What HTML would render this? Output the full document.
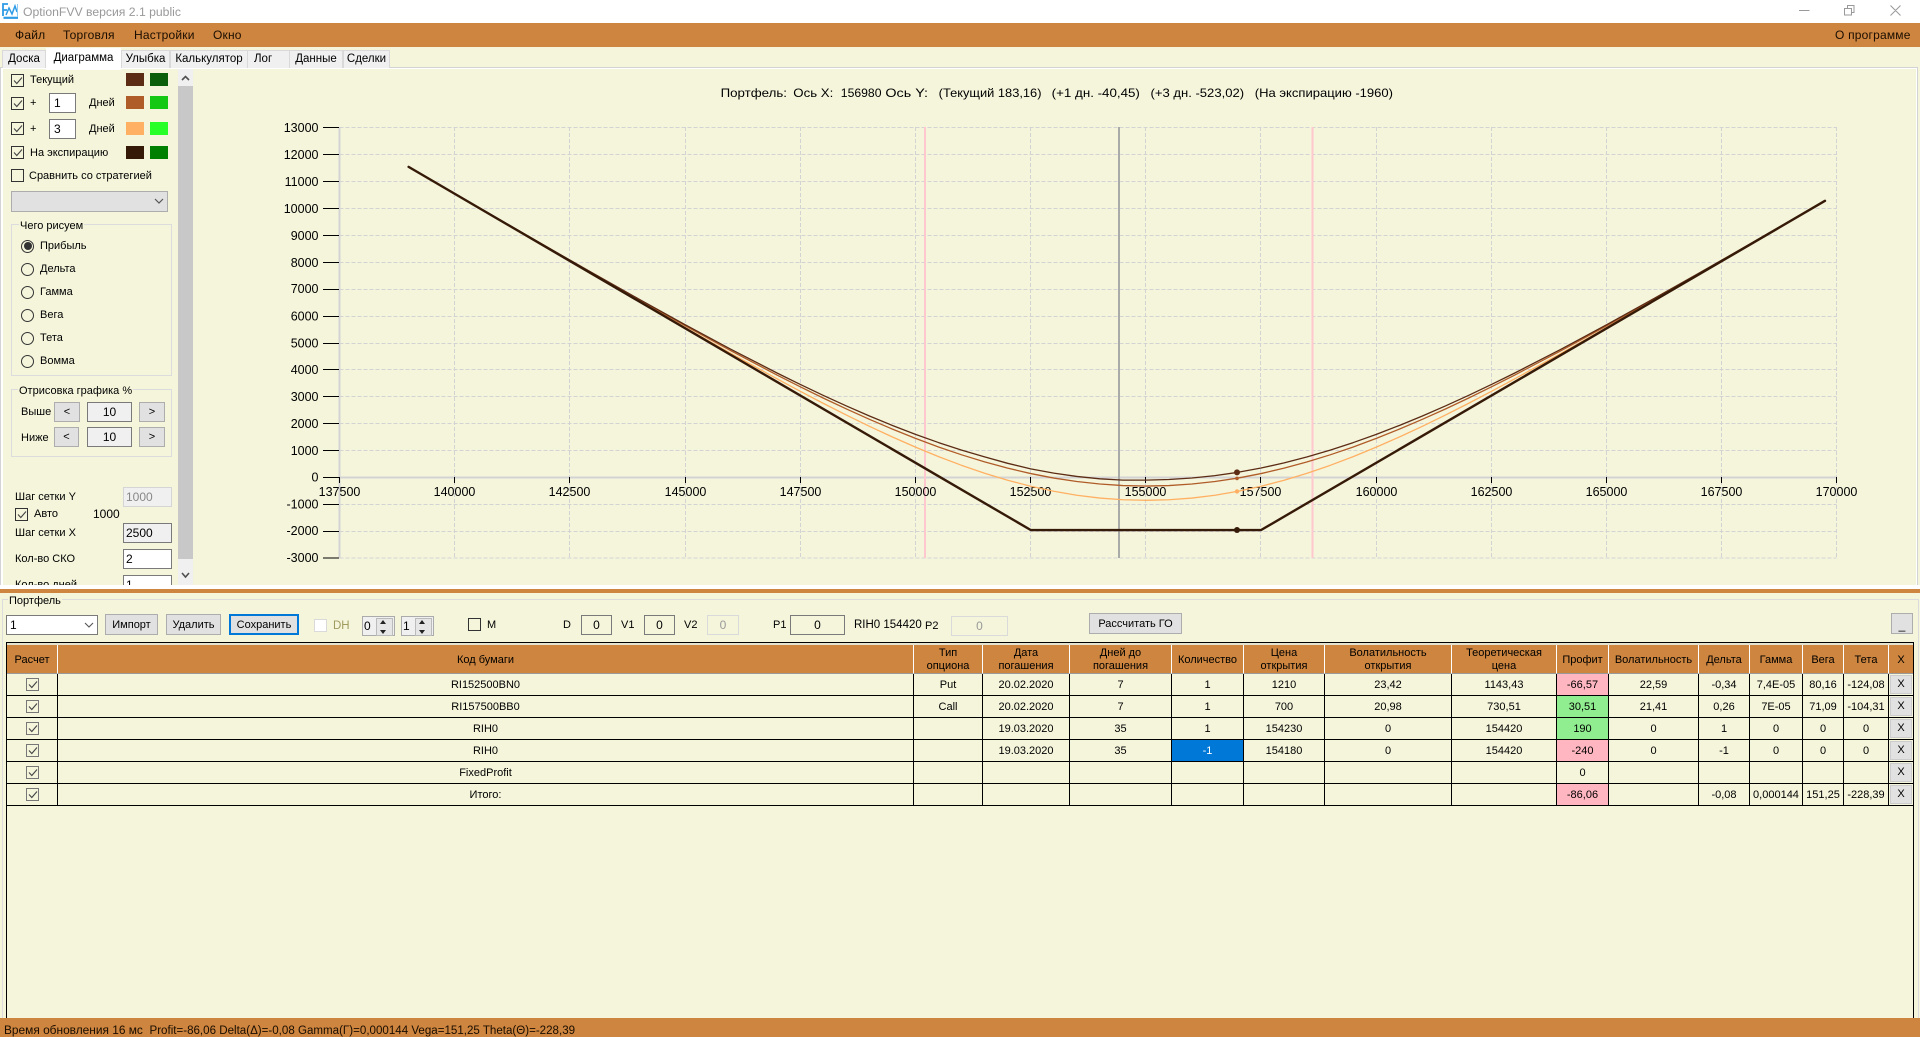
<!DOCTYPE html>
<html lang="ru">
<head>
<meta charset="utf-8">
<title>OptionFVV версия 2.1 public</title>
<style>
html,body{margin:0;padding:0;width:1920px;height:1037px;overflow:hidden;background:#F5F5DC}
body{position:relative;font-family:"Liberation Sans",Arial,sans-serif;font-size:11px;color:#000}
div,span{box-sizing:border-box}
.a{position:absolute}
.t{position:absolute;white-space:pre;line-height:14px;height:14px}
.m{font-size:12px;letter-spacing:.2px;color:#1a0d00}
.tab{position:absolute;top:50px;height:18px;background:#F0F0F0;border:1px solid #D9D9D9;border-bottom:0;text-align:center;line-height:17px;font-size:11.5px;white-space:pre}
.cb{position:absolute;width:13px;height:13px;border:1px solid #333;background:#F5F5DC}
.cb svg{position:absolute;left:0;top:0;width:11px;height:11px}
.sw{position:absolute;width:18px;height:13px}
.in{position:absolute;height:20px;border:1px solid #7A7A7A;background:#fff;line-height:18px;font-size:12px;white-space:pre}
.c{text-align:center}
.btn{position:absolute;background:#E1E1E1;border:1px solid #ADADAD;text-align:center;line-height:20px;font-size:11px;white-space:pre}
.rd{position:absolute;width:13px;height:13px;border:1px solid #333;border-radius:50%;left:21px;background:#F5F5DC}
.gb{position:absolute;border:1px solid #DCDCDC}
.lg{position:absolute;background:#F5F5DC;padding:0 1px;white-space:pre;line-height:14px;font-size:11px}
table{position:absolute;left:7px;top:645px;border-collapse:separate;border-spacing:0;table-layout:fixed;width:1906px;font-size:11px}
th{font-weight:normal;background:#CD853F;height:29px;padding:2px 0 0;border-right:1px solid #fff;border-bottom:1px solid #999;line-height:13px;text-align:center;box-sizing:border-box}
td{height:22px;padding:1px 0 0;border-right:1px solid #000;border-bottom:1px solid #000;text-align:center;box-sizing:border-box;line-height:20px;overflow:hidden;white-space:nowrap}
td:first-child{padding:0;line-height:21px}
td.p{background:#FFB6C1}
td.g{background:#90EE90}
td.s{background:#0078D7;color:#fff}
td.x{background:#F5F5DC;border-right:0;padding:1px 0 1px 1px}
td.x span{display:block;height:19px;background:#E1E1E1;border:1px solid #ccc;line-height:17px;margin-right:1px}
td .cb{position:relative;display:inline-block;vertical-align:middle;margin-top:0;border-color:#777}
.sp{position:absolute;width:33px;height:20px;background:#F0F0F0;border:1px solid #ABABAB;line-height:18px;font-size:12px;padding-left:1px}
.sp i{position:absolute;right:1px;top:1px;width:15px;height:16px;background:#E6E6E6;border:1px solid #BBB}
.sp i:before{content:"";position:absolute;left:3px;top:1px;border:3.5px solid transparent;border-top:0;border-bottom:4px solid #222}
.sp i:after{content:"";position:absolute;left:3px;bottom:1px;border:3.5px solid transparent;border-bottom:0;border-top:4px solid #222}
</style>
</head>
<body>
<!-- title bar -->
<div class="a" style="left:0;top:0;width:1920px;height:23px;background:#fff"></div>
<svg class="a" style="left:2px;top:3px" width="17" height="17" viewBox="0 0 17 17"><path d="M1 1H16V16H1Z" fill="#fff"/><path d="M1 13V1H6M1 7H5" fill="none" stroke="#2E9BE6" stroke-width="1.8"/><path d="M1.5 14.8H16" stroke="#2E9BE6" stroke-width="2.2"/><path d="M4 12L7 5L10 11L13 3L15 9" fill="none" stroke="#2E9BE6" stroke-width="1.5"/><path d="M15.5 1V14" stroke="#8FCBF2" stroke-width="1"/></svg>
<div class="t" style="left:23px;top:5px;font-size:12.2px;color:#999">OptionFVV версия 2.1 public</div>
<svg class="a" style="left:1790px;top:0" width="130" height="23"><path d="M9 10.5H19.5M57.5 8V5.5H64V12.5H61.5M54.5 8.5H61.5V15H54.5Z M100.5 5.5L110.5 15.5 M110.5 5.5L100.5 15.5" fill="none" stroke="#999" stroke-width="1"/></svg>
<!-- menu -->
<div class="a" style="left:0;top:23px;width:1920px;height:24px;background:#CD853F"></div>
<div class="t m" style="left:15px;top:28px">Файл</div>
<div class="t m" style="left:63px;top:28px">Торговля</div>
<div class="t m" style="left:134px;top:28px">Настройки</div>
<div class="t m" style="left:213px;top:28px">Окно</div>
<div class="t m" style="left:1835px;top:28px">О программе</div>
<!-- panel frame -->
<div class="a" style="left:0;top:67px;width:1918px;height:521px;border:1px solid #D3D3D3;border-bottom:0"></div>
<div class="a" style="left:1px;top:68px;width:2px;height:519px;background:#fff"></div>
<div class="a" style="left:1px;top:68px;width:1916px;height:1px;background:#fff"></div>
<div class="a" style="left:1916px;top:68px;width:1px;height:519px;background:#fff"></div>
<div class="a" style="left:0;top:585px;width:1920px;height:4px;background:#fff"></div>
<div class="a" style="left:0;top:589px;width:1920px;height:4px;background:#CD853F"></div>
<!-- tabs -->
<div class="tab" style="left:2px;width:44px">Доска</div>
<div class="tab" style="left:121px;width:49px">Улыбка</div>
<div class="tab" style="left:170px;width:78px">Калькулятор</div>
<div class="tab" style="left:247px;width:43px;text-align:left;padding-left:6px">Лог</div>
<div class="tab" style="left:289px;width:54px">Данные</div>
<div class="tab" style="left:343px;width:47px">Сделки</div>
<div class="tab" style="left:46px;width:75px;top:47.5px;height:22px;background:#fff;border:0;line-height:20px">Диаграмма</div>
<!-- scrollbar -->
<div class="a" style="left:178px;top:69px;width:15px;height:516px;background:#F0F0F0"></div>
<div class="a" style="left:178px;top:86px;width:15px;height:473px;background:#C8C8C8"></div>
<svg class="a" style="left:178px;top:69px" width="15" height="516"><path d="M4 11L7.5 7.5L11 11M4 504L7.5 508L11 504" fill="none" stroke="#505050" stroke-width="1.6"/></svg>
<!-- left controls -->
<svg width="0" height="0" style="position:absolute"><defs><path id="ck" d="M2 5.5L4.8 8.5L10 2.5" fill="none" stroke="#444" stroke-width="1.1"/></defs></svg>
<div class="cb" style="left:11px;top:74px"><svg viewBox="0 0 11 11"><use href="#ck"/></svg></div>
<div class="t" style="left:30px;top:73px">Текущий</div>
<div class="sw" style="left:126px;top:73px;background:#5C2C14"></div><div class="sw" style="left:150px;top:73px;background:#0B5F0B"></div>
<div class="cb" style="left:11px;top:97px"><svg viewBox="0 0 11 11"><use href="#ck"/></svg></div>
<div class="t" style="left:30px;top:96px">+</div>
<div class="in" style="left:49px;top:93px;width:27px;padding-left:4px">1</div>
<div class="t" style="left:89px;top:96px">Дней</div>
<div class="sw" style="left:126px;top:96px;background:#B05C28"></div><div class="sw" style="left:150px;top:96px;background:#14C814"></div>
<div class="cb" style="left:11px;top:122px"><svg viewBox="0 0 11 11"><use href="#ck"/></svg></div>
<div class="t" style="left:30px;top:122px">+</div>
<div class="in" style="left:49px;top:119px;width:27px;padding-left:4px">3</div>
<div class="t" style="left:89px;top:122px">Дней</div>
<div class="sw" style="left:126px;top:122px;background:#FFB062"></div><div class="sw" style="left:150px;top:122px;background:#28FF28"></div>
<div class="cb" style="left:11px;top:146px"><svg viewBox="0 0 11 11"><use href="#ck"/></svg></div>
<div class="t" style="left:30px;top:146px">На экспирацию</div>
<div class="sw" style="left:126px;top:146px;background:#361A08"></div><div class="sw" style="left:150px;top:146px;background:#008000"></div>
<div class="cb" style="left:11px;top:169px"></div>
<div class="t" style="left:29px;top:169px">Сравнить со стратегией</div>
<div class="a" style="left:11px;top:191px;width:157px;height:21px;background:#E1E1E1;border:1px solid #ADADAD"></div>
<svg class="a" style="left:154px;top:198px" width="10" height="7"><path d="M1 1L5 5L9 1" fill="none" stroke="#555" stroke-width="1.2"/></svg>

<div class="gb" style="left:11px;top:224px;width:161px;height:152px"></div>
<div class="lg" style="left:19px;top:219px">Чего рисуем</div>
<div class="rd" style="top:240px"></div><div class="a" style="left:23.5px;top:242px;width:8px;height:8px;border-radius:50%;background:#333"></div>
<div class="t" style="left:40px;top:239px">Прибыль</div>
<div class="rd" style="top:263px"></div><div class="t" style="left:40px;top:262px">Дельта</div>
<div class="rd" style="top:286px"></div><div class="t" style="left:40px;top:285px">Гамма</div>
<div class="rd" style="top:309px"></div><div class="t" style="left:40px;top:308px">Вега</div>
<div class="rd" style="top:332px"></div><div class="t" style="left:40px;top:331px">Тета</div>
<div class="rd" style="top:355px"></div><div class="t" style="left:40px;top:354px">Вомма</div>

<div class="gb" style="left:11px;top:389px;width:161px;height:68px"></div>
<div class="lg" style="left:18px;top:384px">Отрисовка графика %</div>
<div class="t" style="left:21px;top:405px">Выше</div>
<div class="btn" style="left:54px;top:402px;width:26px;height:20px;line-height:18px">&lt;</div>
<div class="in c" style="left:87px;top:402px;width:45px;background:#F0F0F0">10</div>
<div class="btn" style="left:139px;top:402px;width:26px;height:20px;line-height:18px">&gt;</div>
<div class="t" style="left:21px;top:431px">Ниже</div>
<div class="btn" style="left:54px;top:427px;width:25px;height:20px;line-height:18px">&lt;</div>
<div class="in c" style="left:87px;top:427px;width:45px;background:#F0F0F0">10</div>
<div class="btn" style="left:139px;top:427px;width:26px;height:20px;line-height:18px">&gt;</div>

<div class="t" style="left:15px;top:490px">Шаг сетки Y</div>
<div class="in" style="left:123px;top:487px;width:49px;background:#F0F0F0;border-color:#D5D5D5;color:#888;padding-left:2px">1000</div>
<div class="cb" style="left:15px;top:508px"><svg viewBox="0 0 11 11"><use href="#ck"/></svg></div>
<div class="t" style="left:34px;top:507px">Авто</div>
<div class="t" style="left:93px;top:507px;font-size:12px">1000</div>
<div class="t" style="left:15px;top:526px">Шаг сетки X</div>
<div class="in" style="left:123px;top:523px;width:49px;background:#F0F0F0;padding-left:2px">2500</div>
<div class="t" style="left:15px;top:552px">Кол-во СКО</div>
<div class="in" style="left:123px;top:549px;width:49px;padding-left:2px">2</div>
<div class="a" style="left:0;top:575px;width:177px;height:10px;overflow:hidden">
<div class="t" style="left:15px;top:3px">Кол-во дней</div>
<div class="in" style="left:123px;top:0;width:49px;padding-left:2px">1</div>
</div>

<!-- chart -->
<svg class="a" style="left:0;top:0;pointer-events:none" width="1920" height="590" viewBox="0 0 1920 590" font-family="'Liberation Sans',Arial,sans-serif">
<g font-size="12" lengthAdjust="spacingAndGlyphs">
<text x="720.6" y="97" textLength="66.4" lengthAdjust="spacingAndGlyphs">Портфель:</text>
<text x="793.3" y="97" textLength="40" lengthAdjust="spacingAndGlyphs">Ось X:</text>
<text x="840.8" y="97" textLength="40.7" lengthAdjust="spacingAndGlyphs">156980</text>
<text x="885.4" y="97" textLength="42.6" lengthAdjust="spacingAndGlyphs">Ось Y:</text>
<text x="938.7" y="97" textLength="102.8" lengthAdjust="spacingAndGlyphs">(Текущий 183,16)</text>
<text x="1051.7" y="97" textLength="88.2" lengthAdjust="spacingAndGlyphs">(+1 дн. -40,45)</text>
<text x="1150.5" y="97" textLength="93.6" lengthAdjust="spacingAndGlyphs">(+3 дн. -523,02)</text>
<text x="1254.8" y="97" textLength="138.2" lengthAdjust="spacingAndGlyphs">(На экспирацию -1960)</text>
</g>
<path fill="none" stroke="#D3D3D3" stroke-dasharray="4 2" d="M339.5 127.5H1836.5M339.5 154.5H1836.5M339.5 181.5H1836.5M339.5 208.5H1836.5M339.5 235.5H1836.5M339.5 262.5H1836.5M339.5 289.5H1836.5M339.5 316.5H1836.5M339.5 343.5H1836.5M339.5 369.5H1836.5M339.5 396.5H1836.5M339.5 423.5H1836.5M339.5 450.5H1836.5M339.5 504.5H1836.5M339.5 531.5H1836.5M339.5 558H1836.5M454.5 127V558M569.5 127V558M685.5 127V558M800.5 127V558M915.5 127V558M1030.5 127V558M1145.5 127V558M1260.5 127V558M1376.5 127V558M1491.5 127V558M1606.5 127V558M1721.5 127V558M1836.5 127V558"/>
<path fill="none" stroke="#D3D3D3" stroke-width="2" d="M339.5 127V558M339.5 477.5H1837"/>
<path fill="none" stroke="#FFC8CE" stroke-width="2" d="M925 127V558M1312.5 127V558"/>
<path fill="none" stroke="#A9ABA8" stroke-width="2" d="M1119 127V558"/>
<path fill="none" stroke="#000" d="M323 127.5H339M323 154.5H339M323 181.5H339M323 208.5H339M323 235.5H339M323 262.5H339M323 289.5H339M323 316.5H339M323 343.5H339M323 369.5H339M323 396.5H339M323 423.5H339M323 450.5H339M323 477.5H339M323 504.5H339M323 531.5H339M323 558H339M339.5 477V483M454.5 477V483M569.5 477V483M685.5 477V483M800.5 477V483M915.5 477V483M1030.5 477V483M1145.5 477V483M1260.5 477V483M1376.5 477V483M1491.5 477V483M1606.5 477V483M1721.5 477V483M1836.5 477V483"/>
<g font-size="12.5" text-anchor="end">
<text x="318.5" y="132">13000</text><text x="318.5" y="159">12000</text><text x="318.5" y="186">11000</text><text x="318.5" y="213">10000</text><text x="318.5" y="240">9000</text><text x="318.5" y="267">8000</text><text x="318.5" y="293">7000</text><text x="318.5" y="320.5">6000</text><text x="318.5" y="347.5">5000</text><text x="318.5" y="374">4000</text><text x="318.5" y="401">3000</text><text x="318.5" y="428">2000</text><text x="318.5" y="455">1000</text><text x="318.5" y="481.5">0</text><text x="318.5" y="508.5">-1000</text><text x="318.5" y="535">-2000</text><text x="318.5" y="562">-3000</text>
</g>
<g font-size="12.5" text-anchor="middle">
<text x="339.5" y="496">137500</text><text x="454.5" y="496">140000</text><text x="569.5" y="496">142500</text><text x="685.5" y="496">145000</text><text x="800.5" y="496">147500</text><text x="915.5" y="496">150000</text><text x="1030.5" y="496">152500</text><text x="1145.5" y="496">155000</text><text x="1260.5" y="496">157500</text><text x="1376.5" y="496">160000</text><text x="1491.5" y="496">162500</text><text x="1606.5" y="496">165000</text><text x="1721.5" y="496">167500</text><text x="1836.5" y="496">170000</text>
</g>
<g transform="translate(339.5 477.3) scale(.04608 -.0269) translate(-137500 0)" fill="none" stroke-linejoin="round" stroke-linecap="round">
<polyline vector-effect="non-scaling-stroke" stroke="#FFB062" stroke-width="1.3" points="139000,11540 140000,10540 141000,9540 142000,8543 143000,7546 144000,6553 145000,5571 146000,4600 147000,3655 147500,3196 148000,2748 148500,2314 149000,1896 149500,1498 150000,1122 150500,770 151000,445 151500,152 152000,-108 152500,-332 153000,-519 153500,-666 154000,-772 154500,-835 155000,-856 155500,-835 156000,-772 156500,-666 157000,-519 157500,-332 158000,-108 158500,152 159000,445 159500,770 160000,1122 160500,1498 161000,1896 161500,2314 162000,2748 162500,3196 163000,3655 164000,4600 165000,5571 166000,6553 167000,7546 168000,8543 169000,9540 169737,10277"/>
<polyline vector-effect="non-scaling-stroke" stroke="#B05C28" stroke-width="1.3" points="139000,11540 140000,10541 141000,9548 142000,8555 143000,7571 144000,6594 145000,5634 146000,4698 147000,3797 147500,3364 148000,2944 148500,2540 149000,2155 149500,1790 150000,1447 150500,1128 151000,836 151500,573 152000,340 152500,139 153000,-28 153500,-157 154000,-250 154500,-307 155000,-326 155500,-307 156000,-250 156500,-157 157000,-28 157500,139 158000,340 158500,573 159000,836 159500,1128 160000,1447 160500,1790 161000,2155 161500,2540 162000,2944 162500,3364 163000,3797 164000,4698 165000,5634 166000,6594 167000,7571 168000,8555 169000,9548 169737,10277"/>
<polyline vector-effect="non-scaling-stroke" stroke="#5C2C14" stroke-width="1.3" points="139000,11540 140000,10547 141000,9554 142000,8566 143000,7587 144000,6621 145000,5673 146000,4754 147000,3873 147500,3451 148000,3044 148500,2653 149000,2280 149500,1927 150000,1597 150500,1291 151000,1011 151500,758 152000,520 152500,314 153000,156 153500,32 154000,-57 154500,-105 155000,-105 155500,-81 156000,-27 156500,62 157000,186 157500,344 158000,535 158500,758 159000,1011 159500,1291 160000,1597 160500,1927 161000,2280 161500,2653 162000,3044 162500,3451 163000,3873 164000,4754 165000,5673 166000,6621 167000,7587 168000,8566 169000,9554 169737,10277"/>
<polyline vector-effect="non-scaling-stroke" stroke="#361A08" stroke-width="2.4" points="139000,11540 152500,-1960 157500,-1960 169737,10277"/>
</g>
<circle cx="1237" cy="472.4" r="3" fill="#5C2C14"/>
<circle cx="1237" cy="478.4" r="1.8" fill="#B05C28"/>
<circle cx="1237" cy="491.4" r="2.2" fill="#FFB062"/>
<circle cx="1237" cy="530" r="3" fill="#361A08"/>
</svg>

<!-- portfolio group -->
<div class="a" style="left:2px;top:599px;width:1917px;height:420px;border:1px solid #DCDCDC;border-bottom:0"></div>
<div class="lg" style="left:8px;top:594px">Портфель</div>
<div class="in" style="left:6px;top:615px;width:92px;padding-left:3px">1</div>
<svg class="a" style="left:84px;top:622px" width="10" height="7"><path d="M1 1L5 5L9 1" fill="none" stroke="#555" stroke-width="1.1"/></svg>
<div class="btn" style="left:105px;top:614px;width:53px;height:21px">Импорт</div>
<div class="btn" style="left:166px;top:614px;width:55px;height:21px">Удалить</div>
<div class="btn" style="left:229px;top:614px;width:70px;height:21px;border:2px solid #0078D7;line-height:18px">Сохранить</div>
<div class="cb" style="left:314px;top:619px;background:#fff;border-color:#DADADA"></div>
<div class="t" style="left:333px;top:619px;color:#A09A5F;font-size:11.5px">DH</div>
<div class="sp" style="left:362px;top:616px">0<i></i></div>
<div class="sp" style="left:401px;top:616px">1<i></i></div>
<div class="cb" style="left:468px;top:618px"></div>
<div class="t" style="left:487px;top:618px">M</div>
<div class="t" style="left:563px;top:618px">D</div>
<div class="in c" style="left:581px;top:615px;width:31px;background:#F5F5DC">0</div>
<div class="t" style="left:621px;top:618px">V1</div>
<div class="in c" style="left:644px;top:615px;width:31px;background:#F5F5DC">0</div>
<div class="t" style="left:684px;top:618px">V2</div>
<div class="in c" style="left:707px;top:615px;width:32px;background:#F5F5DC;border-color:#DADADA;color:#999">0</div>
<div class="t" style="left:773px;top:618px">P1</div>
<div class="in c" style="left:790px;top:615px;width:55px;background:#F5F5DC">0</div>
<div class="t" style="left:854px;top:618px;font-size:11.5px">RIH0 154420</div>
<div class="t" style="left:925px;top:619px">P2</div>
<div class="in c" style="left:951px;top:616px;width:57px;background:#F5F5DC;border-color:#DADADA;color:#999">0</div>
<div class="btn" style="left:1089px;top:613px;width:93px;height:21px">Рассчитать ГО</div>
<div class="btn" style="left:1891px;top:613px;width:22px;height:21px;line-height:22px;font-size:12px">_</div>

<!-- grid -->
<div class="a" style="left:6px;top:642px;width:1908px;height:1px;background:#000"></div>
<div class="a" style="left:6px;top:643px;width:1908px;height:2px;background:#E3E3D0"></div>
<div class="a" style="left:6px;top:642px;width:1px;height:376px;background:#000"></div>
<div class="a" style="left:1913px;top:642px;width:1px;height:376px;background:#000"></div>
<table>
<colgroup><col style="width:51px"><col style="width:856px"><col style="width:69px"><col style="width:87px"><col style="width:102px"><col style="width:72px"><col style="width:81px"><col style="width:127px"><col style="width:105px"><col style="width:52px"><col style="width:90px"><col style="width:51px"><col style="width:53px"><col style="width:41px"><col style="width:45px"><col style="width:24px"></colgroup>
<tr><th>Расчет</th><th>Код бумаги</th><th>Тип<br>опциона</th><th>Дата<br>погашения</th><th>Дней до<br>погашения</th><th>Количество</th><th>Цена<br>открытия</th><th>Волатильность<br>открытия</th><th>Теоретическая<br>цена</th><th>Профит</th><th>Волатильность</th><th>Дельта</th><th>Гамма</th><th>Вега</th><th>Тета</th><th style="border-right:0">X</th></tr>
<tr><td><span class="cb"><svg viewBox="0 0 11 11"><use href="#ck"/></svg></span></td><td>RI152500BN0</td><td>Put</td><td>20.02.2020</td><td>7</td><td>1</td><td>1210</td><td>23,42</td><td>1143,43</td><td class="p">-66,57</td><td>22,59</td><td>-0,34</td><td>7,4E-05</td><td>80,16</td><td>-124,08</td><td class="x"><span>X</span></td></tr>
<tr><td><span class="cb"><svg viewBox="0 0 11 11"><use href="#ck"/></svg></span></td><td>RI157500BB0</td><td>Call</td><td>20.02.2020</td><td>7</td><td>1</td><td>700</td><td>20,98</td><td>730,51</td><td class="g">30,51</td><td>21,41</td><td>0,26</td><td>7E-05</td><td>71,09</td><td>-104,31</td><td class="x"><span>X</span></td></tr>
<tr><td><span class="cb"><svg viewBox="0 0 11 11"><use href="#ck"/></svg></span></td><td>RIH0</td><td></td><td>19.03.2020</td><td>35</td><td>1</td><td>154230</td><td>0</td><td>154420</td><td class="g">190</td><td>0</td><td>1</td><td>0</td><td>0</td><td>0</td><td class="x"><span>X</span></td></tr>
<tr><td><span class="cb"><svg viewBox="0 0 11 11"><use href="#ck"/></svg></span></td><td>RIH0</td><td></td><td>19.03.2020</td><td>35</td><td class="s">-1</td><td>154180</td><td>0</td><td>154420</td><td class="p">-240</td><td>0</td><td>-1</td><td>0</td><td>0</td><td>0</td><td class="x"><span>X</span></td></tr>
<tr><td><span class="cb"><svg viewBox="0 0 11 11"><use href="#ck"/></svg></span></td><td>FixedProfit</td><td></td><td></td><td></td><td></td><td></td><td></td><td></td><td>0</td><td></td><td></td><td></td><td></td><td></td><td class="x"><span>X</span></td></tr>
<tr><td><span class="cb"><svg viewBox="0 0 11 11"><use href="#ck"/></svg></span></td><td>Итого:</td><td></td><td></td><td></td><td></td><td></td><td></td><td></td><td class="p">-86,06</td><td></td><td>-0,08</td><td>0,000144</td><td>151,25</td><td>-228,39</td><td class="x"><span>X</span></td></tr>
</table>
<div class="a" style="left:1888px;top:805px;width:25px;height:1px;background:#000"></div>

<!-- status bar -->
<div class="a" style="left:0;top:1018px;width:1920px;height:19px;background:#CD853F"></div>
<div class="t" style="left:4px;top:1023px;font-size:11.9px;color:#1a0d00">Время обновления 16 мс  <span style="font-size:11.57px">Profit=-86,06 Delta(Δ)=-0,08 Gamma(Γ)=0,000144 Vega=151,25 Theta(Θ)=-228,39</span></div>
</body>
</html>
